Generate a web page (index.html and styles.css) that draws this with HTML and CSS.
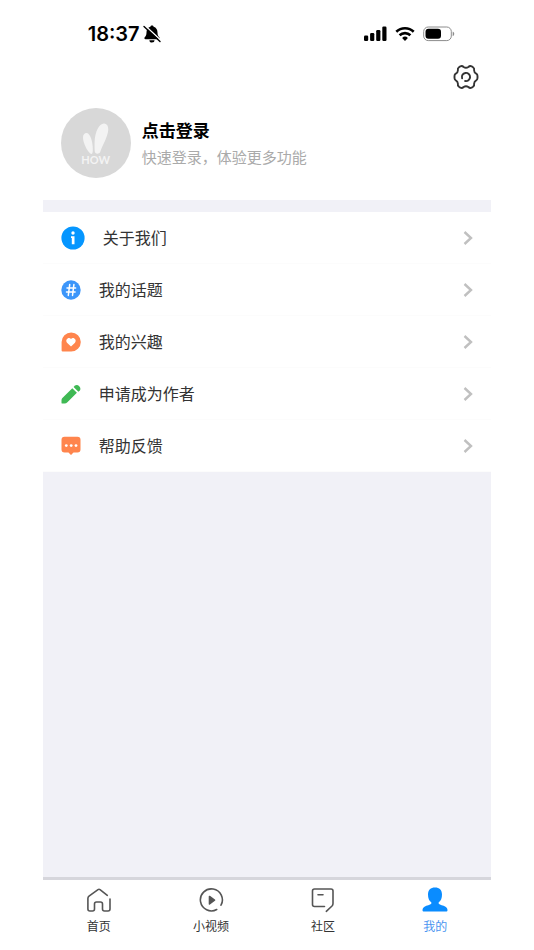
FILE: index.html
```
<!DOCTYPE html>
<html lang="zh-CN">
<head>
    <meta charset="UTF-8">
    <meta name="viewport" content="width=device-width, initial-scale=1">
    <title>我的</title>
    <link rel="stylesheet" href="styles.css">
</head>
<body>
    <div class="app">
        <div class="status-bar">
            <div class="status-left">
                <span class="time">18:37</span>
                <svg width="18" height="18" viewBox="0 0 18 18">
                    <path d="M9 .5c.9 0 1.500.5 1.600 1.300C13.300 2.600 14.500 4.800 14.500 7.500c0 2.800.8 3.600 1.800 4.700.7.8.3 2-.8 2h-13c-1.100 0-1.500-1.200-.8-2 1-1.100 1.800-1.900 1.800-4.700 0-2.700 1.200-4.900 3.900-5.700C7.500 1 8.100.5 9 .5z"/>
                    <path d="M6.400 15.200h5.200a2.600 2.300 0 0 1-5.200 0z"/>
                    <path d="M2 0.500l16 15" stroke="#fff" stroke-width="1.400"/>
                    <path d="M1 1.500l16 15" stroke="#000" stroke-width="1.400" stroke-linecap="round"/>
                </svg>
            </div>
            <div class="status-right">
                <svg width="24" height="16" viewBox="0 0 24 16">
                    <rect x="1" y="9.500" width="4.200" height="5.500" rx="1.200"/>
                    <rect x="7.100" y="7" width="4.200" height="8" rx="1.200"/>
                    <rect x="13.200" y="4" width="4.200" height="11" rx="1.200"/>
                    <rect x="19.300" y="0.500" width="4.200" height="14.500" rx="1.200"/>
                </svg>
                <svg width="20" height="16" viewBox="0 0 20 16" fill="none" stroke="#000" stroke-width="2.600">
                    <path d="M1.300 5.800a12.500 12.500 0 0 1 17.400 0"/>
                    <path d="M4.600 9.300a7.700 7.700 0 0 1 10.800 0"/>
                    <path d="M10 15l-2.900-3a4.200 4.200 0 0 1 5.800 0z" fill="#000" stroke="none"/>
                </svg>
                <svg width="32" height="16" viewBox="0 0 32 16">
                    <rect x="0.700" y="1" width="27.600" height="13.600" rx="4.500" fill="none" stroke="#8c8c8c"/>
                    <rect x="2.500" y="2.800" width="15.500" height="10" rx="3"/>
                    <path d="M29.700 5.600c2 .8 2 3.800 0 4.600z" fill="#8c8c8c"/>
                </svg>
            </div>
        </div>

        <div class="toolbar">
            <button class="settings-button" type="button" aria-label="设置">
                <svg width="26" height="26" viewBox="0 0 26 26" fill="none" stroke="#333" stroke-width="1.900" stroke-linecap="round" stroke-linejoin="round">
                    <path d="M10.600 3Q13 4.600 15.400 3Q16.800 1.500 18.600 2.300L20 3.200Q21.600 4.300 21.100 6.200Q21.200 8.700 23.200 9.700Q24.500 10.400 24.500 12V14Q24.500 15.600 23.200 16.300Q21.200 17.300 21.100 19.800Q21.600 21.700 20 22.800L18.600 23.700Q16.800 24.500 15.400 23Q13 21.400 10.600 23Q9.200 24.500 7.400 23.700L6 22.800Q4.400 21.700 4.900 19.800Q4.800 17.300 2.800 16.300Q1.500 15.600 1.500 14V12Q1.500 10.400 2.800 9.700Q4.800 8.700 4.900 6.200Q4.400 4.300 6 3.200L7.400 2.300Q9.200 1.500 10.600 3z"/>
                    <path d="M9.100 14.300a4.100 4.100 0 1 1 3 2.700"/>
                </svg>
            </button>
        </div>

        <div class="profile">
            <div class="avatar">
                <svg width="30" height="32" viewBox="0 0 30 32" fill="#f3f3f3">
                    <path d="M5.500 11C9 11 11.800 19 11.800 27.500 11.800 30.500 11.400 32 10.300 32 8 32 2 22 2 15.500 2 12.500 3.500 11 5.500 11z"/>
                    <path d="M23 1.500C26 1.500 27.500 4 27.200 8 26.800 15 21 24 19.200 30 18.500 32 14.500 32.500 13.900 30 13.500 28 13.500 24 13.600 20 13.900 10 18 1.500 23 1.500z"/>
                </svg>
                <span class="avatar-name">HOW</span>
            </div>
            <div class="profile-text">
                <a class="login" href="#">点击登录</a>
                <p class="login-tip">快速登录，体验更多功能</p>
            </div>
        </div>

        <nav class="menu">
            <a class="menu-item" href="#">
                <svg width="24" height="24" viewBox="0 0 24 24">
                    <circle cx="12" cy="12" r="11.600" fill="#0596ff"/>
                    <circle cx="12" cy="7" r="1.700" fill="#fff"/>
                    <path d="M10 10.300h3.500v8h-2.700v-6.200H10z" fill="#fff"/>
                </svg>
                <span class="menu-label">关于我们</span>
                <svg class="arrow" width="10" height="16" viewBox="0 0 10 16"><path d="M1.500 2l6.500 6-6.500 6"/></svg>
            </a>
            <a class="menu-item" href="#">
                <svg width="20" height="20" viewBox="0 0 20 20">
                    <circle cx="10" cy="10" r="9.700" fill="#3c96fa"/>
                    <path d="M8.700 4.600l-1.400 10.800M12.900 4.600l-1.400 10.800M6 8h8.600M5.500 12h8.600" stroke="#fff" stroke-width="1.500" stroke-linecap="round"/>
                </svg>
                <span class="menu-label">我的话题</span>
                <svg class="arrow" width="10" height="16" viewBox="0 0 10 16"><path d="M1.500 2l6.500 6-6.500 6"/></svg>
            </a>
            <a class="menu-item" href="#">
                <svg width="20" height="20" viewBox="0 0 20 20">
                    <path d="M10.200.4a9.600 9.600 0 1 1 0 19.200H1.700Q.6 19.600.6 18.500V10A9.600 9.600 0 0 1 10.200.4z" fill="#ff854d"/>
                    <path d="M10 14.600l-4-3.900C3.600 8 7.800 4.200 10 7.100c2.200-2.900 6.400.9 4 3.600z" fill="#fff"/>
                </svg>
                <span class="menu-label">我的兴趣</span>
                <svg class="arrow" width="10" height="16" viewBox="0 0 10 16"><path d="M1.500 2l6.500 6-6.500 6"/></svg>
            </a>
            <a class="menu-item" href="#">
                <svg width="20" height="20" viewBox="0 0 20 20" fill="#3fb954">
                    <path d="M11.300 4.200l4.600 4.600L6.400 18.300Q5.200 19.600 3.600 19.600H1.400Q.5 19.600.5 18.700V16.200Q.5 15 1.400 14.100z"/>
                    <path d="M12.600 3l1.300-1.500a3.700 3.700 0 0 1 5 5l-1.500 1.200z"/>
                </svg>
                <span class="menu-label">申请成为作者</span>
                <svg class="arrow" width="10" height="16" viewBox="0 0 10 16"><path d="M1.500 2l6.500 6-6.500 6"/></svg>
            </a>
            <a class="menu-item" href="#">
                <svg width="20" height="20" viewBox="0 0 20 20">
                    <path d="M3.500.8h13a3 3 0 0 1 3 3v9.700a3 3 0 0 1-3 3h-4L10 19l-2.500-2.500h-4a3 3 0 0 1-3-3V3.800a3 3 0 0 1 3-3z" fill="#ff854d"/>
                    <g fill="#fff">
                        <circle cx="5.300" cy="9.600" r="1.400"/>
                        <circle cx="10.200" cy="9.600" r="1.400"/>
                        <circle cx="15" cy="9.600" r="1.400"/>
                    </g>
                </svg>
                <span class="menu-label">帮助反馈</span>
                <svg class="arrow" width="10" height="16" viewBox="0 0 10 16"><path d="M1.500 2l6.500 6-6.500 6"/></svg>
            </a>
        </nav>

        <div class="blank"></div>

        <nav class="tab-bar">
            <a class="tab" href="#">
                <svg width="26" height="26" viewBox="0 0 26 26">
                    <path d="M21.300 8.300L14 2.600q-1-.7-2 0L3 9.200Q1.900 10 1.900 11.500V22Q1.900 24 3.900 24H6.500Q8.500 24 8.500 22V17Q8.500 15 10.500 15H14.500Q16.500 15 16.500 17V22Q16.500 24 18.500 24H22Q24 24 24 22V12"/>
                </svg>
                <span>首页</span>
            </a>
            <a class="tab" href="#">
                <svg width="26" height="26" viewBox="0 0 26 26">
                    <path d="M18.700 22.500A11 11 0 1 1 23 18.200"/>
                    <path d="M11.500 9.500l5 3.700-5 3.700z" fill="#555"/>
                </svg>
                <span>小视频</span>
            </a>
            <a class="tab" href="#">
                <svg width="26" height="26" viewBox="0 0 26 26">
                    <path d="M14.500 19.500H4.500Q2.500 19.500 2.500 17.500V4Q2.500 2 4.500 2H21Q23 2 23 4V16.500Q23 18 22 19L16.300 24.300M8 7.700h5"/>
                </svg>
                <span>社区</span>
            </a>
            <a class="tab active" href="#">
                <svg width="26" height="26" viewBox="0 0 26 26">
                    <path d="M13 .5c4.400 0 7 2.600 7 7 0 3.700-1 6.300-3.300 7.700v1.600c1.200 1 4.500 1.700 6.800 3 1.400.8 2 1.900 2 3.500 0 .8-.5 1.200-1.500 1.200H2c-1 0-1.500-.4-1.500-1.200 0-1.600.6-2.700 2-3.500 2.300-1.300 5.600-2 6.800-3v-1.600C7 13.800 6 11.200 6 7.500c0-4.400 2.600-7 7-7z"/>
                </svg>
                <span>我的</span>
            </a>
        </nav>
    </div>
</body>
</html>
```
FILE: styles.css
```
* {
    box-sizing: border-box;
}

body {
    margin: 0;
    background: #fff;
    color: #333;
    font-family: "Liberation Sans", "Noto Sans CJK SC", sans-serif;
}

a {
    color: inherit;
    text-decoration: none;
}

svg {
    display: block;
    flex-shrink: 0;
}

.app {
    display: flex;
    flex-direction: column;
    width: 84%;
    min-height: 100vh;
    margin: 0 auto;
}

/* status bar */
.status-bar {
    display: flex;
    justify-content: space-between;
    align-items: center;
    padding: 22px 36px 0 45px;
    height: 46px;
}

.status-left,
.status-right {
    display: flex;
    align-items: center;
    gap: 8px;
}

.status-left {
    gap: 3px;
}

.time {
    font-family: Inter, sans-serif;
    font-size: 20px;
    font-weight: 600;
    line-height: 24px;
    color: #000;
}

.toolbar {
    display: flex;
    justify-content: flex-end;
    padding: 18px 12px;
}

.settings-button {
    padding: 0;
    border: 0;
    background: none;
    cursor: pointer;
}

/* profile */
.profile {
    display: flex;
    align-items: center;
    gap: 11px;
    padding: 0 18px 22px;
    border-bottom: 12px solid #f1f1f7;
}

.avatar {
    display: flex;
    flex-direction: column;
    align-items: center;
    width: 70px;
    height: 70px;
    padding-top: 14px;
    border-radius: 50%;
    background: #d8d8d8;
}

.avatar-name {
    font-family: Lato, sans-serif;
    font-size: 11px;
    font-weight: 700;
    line-height: 12px;
    color: #f3f3f3;
}

.profile-text {
    padding-top: 4px;
}

.login {
    display: block;
    font-size: 17px;
    font-weight: 700;
    line-height: 26px;
    color: #000;
}

.login-tip {
    margin: 0;
    font-size: 15px;
    line-height: 26px;
    color: #aaa;
}

/* menu */
.menu-item {
    display: flex;
    align-items: center;
    gap: 18px;
    height: 52px;
    padding: 0 18px;
    border-bottom: 1px solid #fcfcfc;
}

.menu-label {
    flex: 1;
    padding-top: 3px;
    font-size: 16px;
    line-height: 24px;
}

.arrow {
    fill: none;
    stroke: #c0c0c0;
    stroke-width: 2.4px;
}

.blank {
    flex: 1;
    background: #f1f1f7;
}

/* tab bar */
.tab-bar {
    display: flex;
    padding: 7px 0 14px;
    border-top: 3px solid #d6d6dc;
}

.tab {
    display: flex;
    flex: 1;
    flex-direction: column;
    align-items: center;
    gap: 5px;
    font-size: 12px;
    line-height: 18px;
}

.tab svg {
    fill: none;
    stroke: #555;
    stroke-width: 1.6px;
    stroke-linecap: round;
    stroke-linejoin: round;
}

.tab.active {
    color: #4a94f0;
}

.tab.active svg {
    fill: #0a8cff;
    stroke: none;
}
```
